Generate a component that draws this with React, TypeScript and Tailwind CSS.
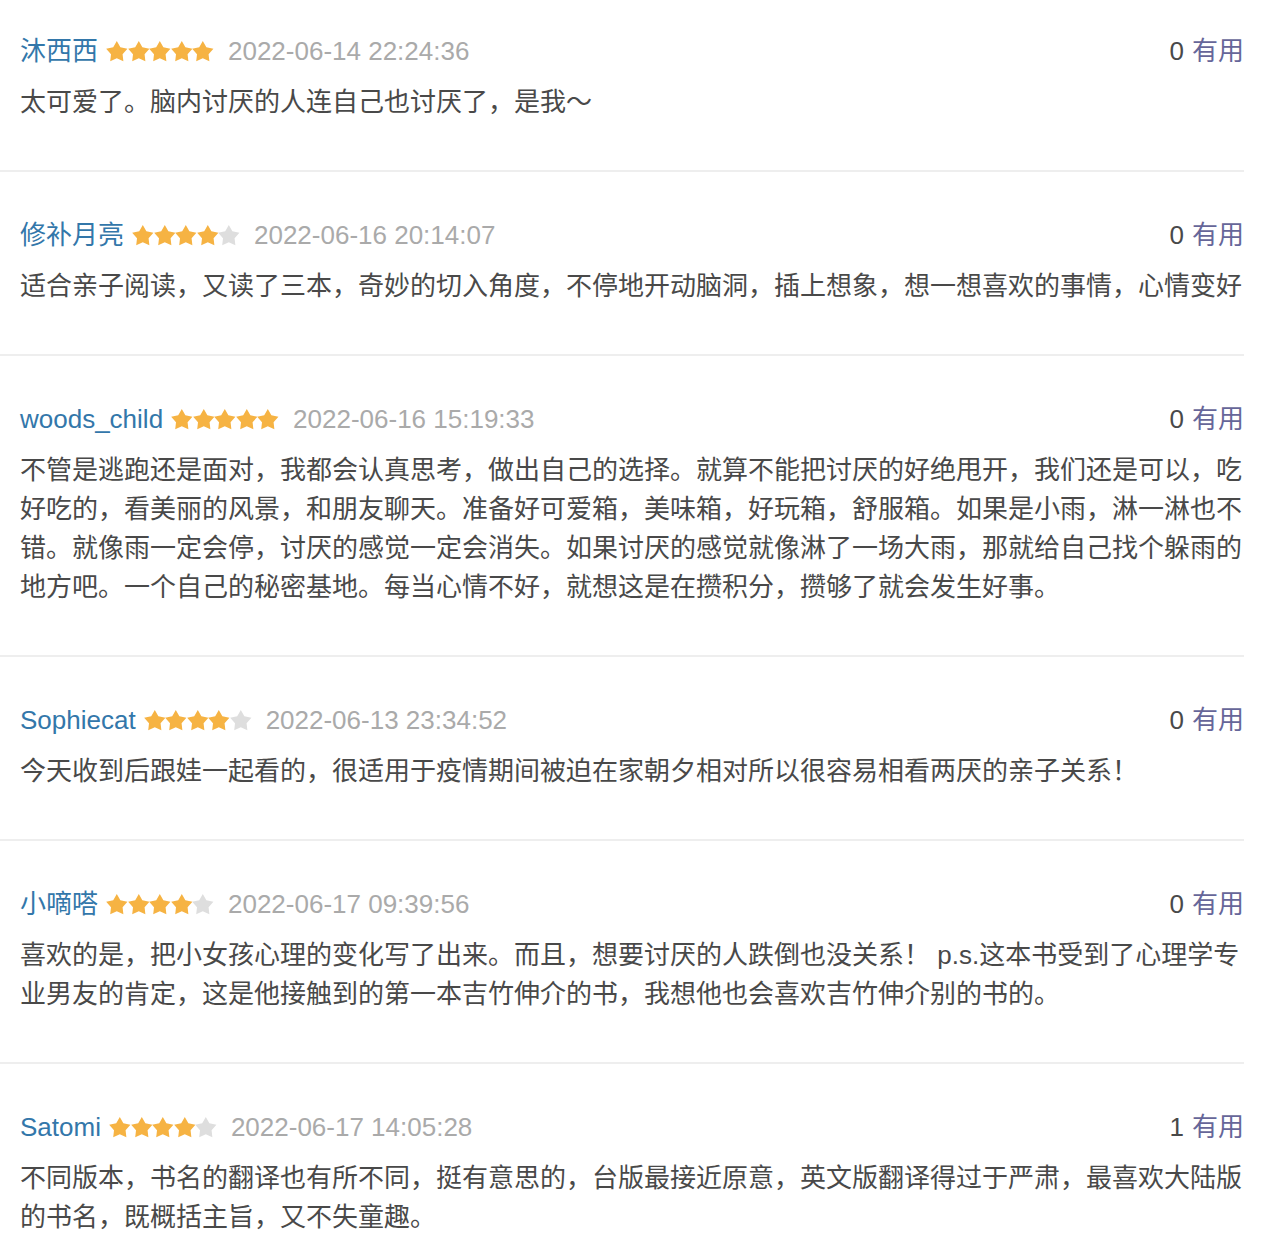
import React from "react";

type Item = {
  user: string;
  stars: number;
  date: string;
  votes: number;
  text: string;
};

const items: Item[] = [
  {
    user: "沐西西",
    stars: 5,
    date: "2022-06-14 22:24:36",
    votes: 0,
    text: "太可爱了。脑内讨厌的人连自己也讨厌了，是我～",
  },
  {
    user: "修补月亮",
    stars: 4,
    date: "2022-06-16 20:14:07",
    votes: 0,
    text: "适合亲子阅读，又读了三本，奇妙的切入角度，不停地开动脑洞，插上想象，想一想喜欢的事情，心情变好",
  },
  {
    user: "woods_child",
    stars: 5,
    date: "2022-06-16 15:19:33",
    votes: 0,
    text: "不管是逃跑还是面对，我都会认真思考，做出自己的选择。就算不能把讨厌的好绝甩开，我们还是可以，吃好吃的，看美丽的风景，和朋友聊天。准备好可爱箱，美味箱，好玩箱，舒服箱。如果是小雨，淋一淋也不错。就像雨一定会停，讨厌的感觉一定会消失。如果讨厌的感觉就像淋了一场大雨，那就给自己找个躲雨的地方吧。一个自己的秘密基地。每当心情不好，就想这是在攒积分，攒够了就会发生好事。",
  },
  {
    user: "Sophiecat",
    stars: 4,
    date: "2022-06-13 23:34:52",
    votes: 0,
    text: "今天收到后跟娃一起看的，很适用于疫情期间被迫在家朝夕相对所以很容易相看两厌的亲子关系！",
  },
  {
    user: "小嘀嗒",
    stars: 4,
    date: "2022-06-17 09:39:56",
    votes: 0,
    text: "喜欢的是，把小女孩心理的变化写了出来。而且，想要讨厌的人跌倒也没关系！ p.s.这本书受到了心理学专业男友的肯定，这是他接触到的第一本吉竹伸介的书，我想他也会喜欢吉竹伸介别的书的。",
  },
  {
    user: "Satomi",
    stars: 4,
    date: "2022-06-17 14:05:28",
    votes: 1,
    text: "不同版本，书名的翻译也有所不同，挺有意思的，台版最接近原意，英文版翻译得过于严肃，最喜欢大陆版的书名，既概括主旨，又不失童趣。",
  },
];

function Star({ on }: { on: boolean }) {
  return (
    <svg
      viewBox="0 0 22 22"
      className="block shrink-0 w-[21.6px] h-[23px] overflow-visible"
    >
      <polygon
        points="11,0.4 14.64,6.78 21.84,8.28 16.9,13.72 17.7,21.02 11,18 4.3,21.02 5.1,13.72 0.16,8.28 7.36,6.78"
        fill={on ? "#f6b343" : "#dedede"}
      />
    </svg>
  );
}

function Stars({ n }: { n: number }) {
  return (
    <span className="flex items-center">
      {[0, 1, 2, 3, 4].map((i) => (
        <Star key={i} on={i < n} />
      ))}
    </span>
  );
}

export default function App() {
  return (
    <div
      className="bg-white w-[1244px] text-[26px] leading-[39px] text-[#494949]"
      style={{ fontFamily: '"Liberation Sans", "Noto Sans CJK SC", sans-serif' }}
    >
      {items.map((it, idx) => (
        <div
          key={idx}
          className={`border-b-2 border-[#eeeeee] pl-[20px] pb-[48px] ${
            idx === 0 ? "pt-[32px]" : "pt-[44px]"
          }`}
        >
          <div className="flex items-center justify-between">
            <div className="flex items-center">
              <span className="text-[#3377aa]">{it.user}</span>
              <span className="ml-[8px]">
                <Stars n={it.stars} />
              </span>
              <span className="ml-[14px] text-[#aaaaaa]">{it.date}</span>
            </div>
            <div>
              <span className="text-[#494949]">{it.votes}</span>
              <span className="ml-[8px] text-[#666699]">有用</span>
            </div>
          </div>
          <p className="mt-[12px]">{it.text}</p>
        </div>
      ))}
    </div>
  );
}
